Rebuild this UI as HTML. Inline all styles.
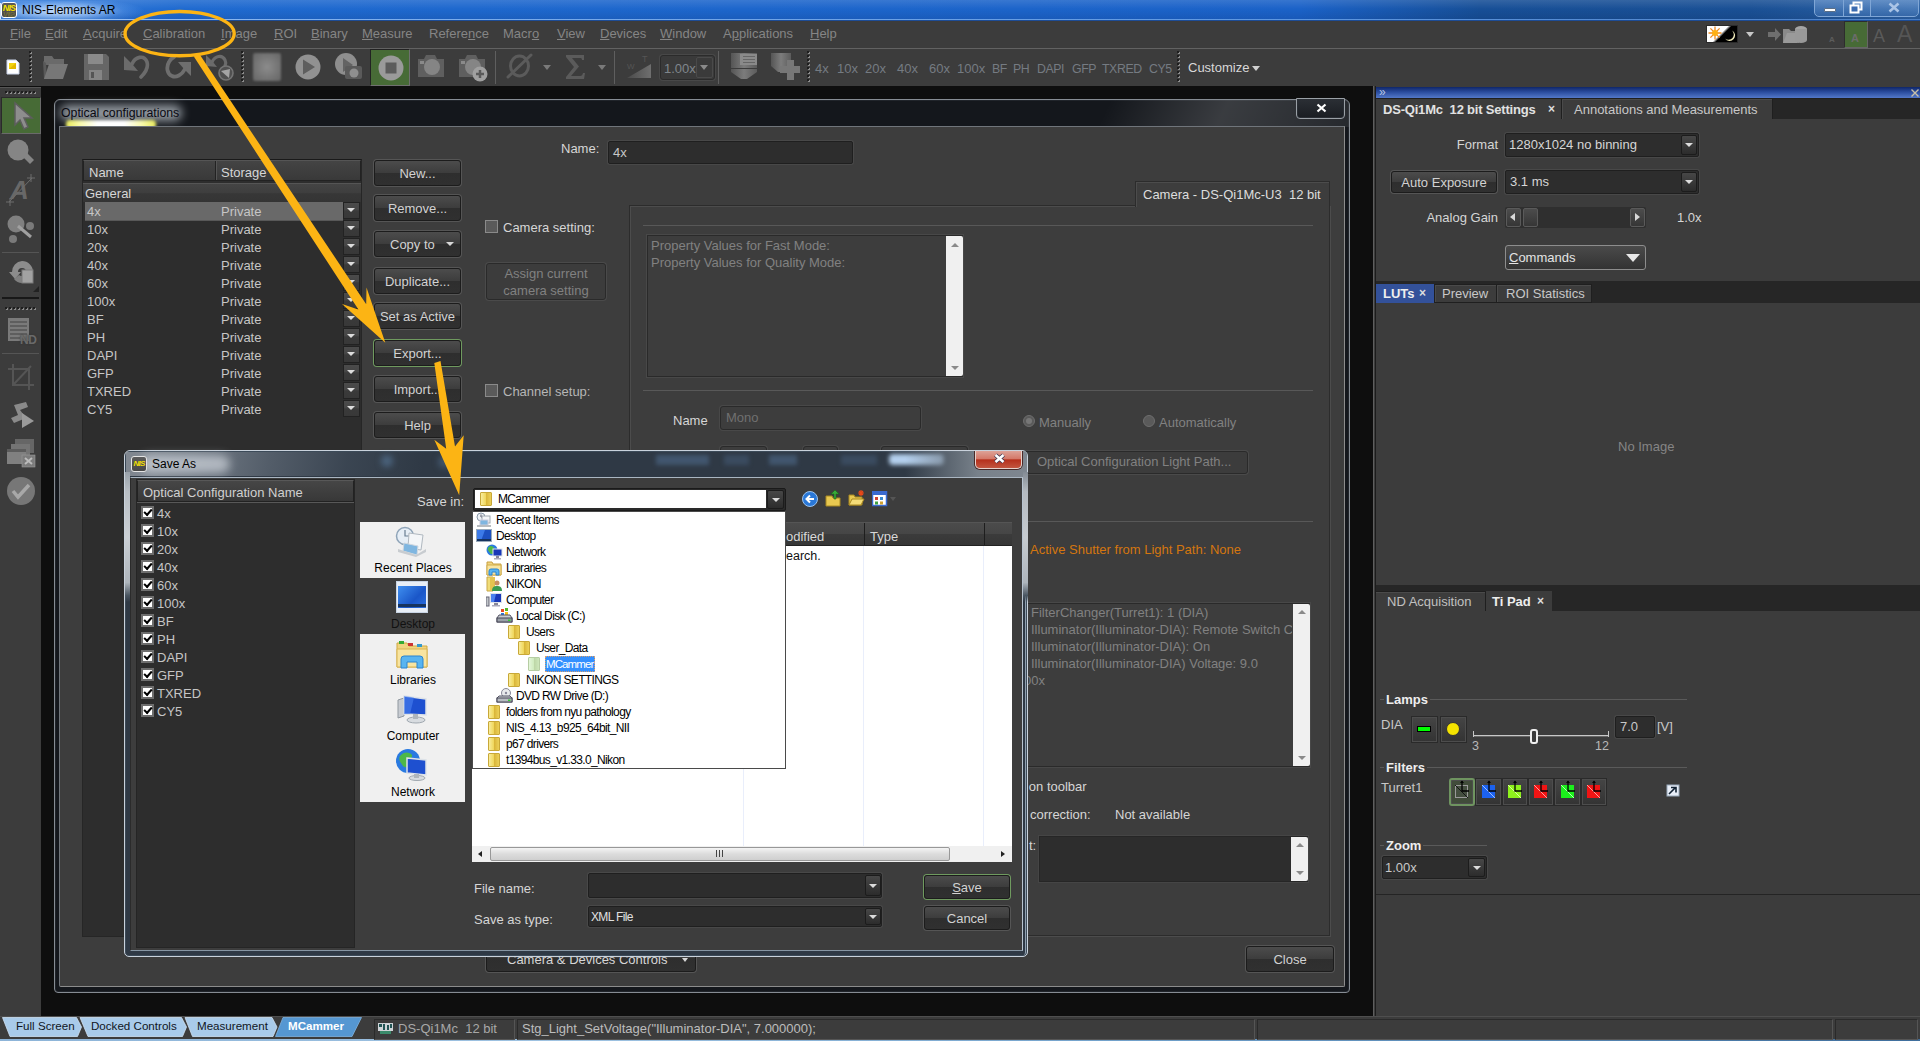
<!DOCTYPE html>
<html><head><meta charset="utf-8"><title>NIS-Elements AR</title>
<style>
*{box-sizing:border-box;margin:0;padding:0}
html,body{width:1920px;height:1041px;overflow:hidden;background:#3c3c3c;font-family:"Liberation Sans",sans-serif;font-size:13px;color:#d6d6d6}
.abs,.abs>*{position:absolute}
.abs{left:0;top:0}
.t{white-space:nowrap;line-height:16px;height:16px}
.dis{color:#818181}
.btn{border:1px solid #1c1c1c;border-radius:3px;background:linear-gradient(#4c4c4c 0%,#3d3d3d 48%,#2e2e2e 52%,#303030 100%);box-shadow:0 0 0 1px #555;text-align:center;color:#d2d2d2;white-space:nowrap;padding-top:1px}
.inp{background:#2d2d2d;border:1px solid #1f1f1f;border-radius:2px;box-shadow:0 0 0 1px #484848}
.dd{background:linear-gradient(#474747,#2c2c2c);border:1px solid #1c1c1c;border-radius:2px}
.dd:after{content:"";position:absolute;left:50%;top:50%;margin:-2px 0 0 -4px;border:4px solid transparent;border-top:4px solid #dcdcdc;border-bottom:0}
.hl{background:#666}
.sep{background:#5a5a5a;height:1px}
.grip{width:4px;background:repeating-linear-gradient(#8a8a8a 0,#8a8a8a 1px,#222 1px,#222 3px,transparent 3px,transparent 4px);background-size:3px 4px}
.tbl{top:61px;color:#757b82;font-size:13px}
.hgrip{height:4px;background:repeating-linear-gradient(90deg,#8a8a8a 0,#8a8a8a 1px,#222 1px,#222 3px,transparent 3px,transparent 4px)}
.sbtn{background:linear-gradient(#4c4c4c,#363636);border:1px solid #5a5a5a;border-radius:2px}
.sq{background:linear-gradient(#454545,#333);border:1px solid #2a2a2a;box-shadow:inset 0 0 0 1px #4d4d4d}
.lr{font-size:13px;color:#c6c6c6}
.ldd{width:17px;height:17px;background:linear-gradient(#4b4b4b 0,#464646 45%,#3a3a3a 52%,#383838 100%);border:1px solid #222}
.ldd:after{content:"";position:absolute;left:3px;top:5px;border:4px solid transparent;border-top:4.500px solid #dcdcdc;border-bottom:0}
.gl{height:1px;background:#585858}
.cb{width:13px;height:13px;background:#5a5a5a;border:1px solid #8a8a8a}
.rb{width:12px;height:12px;border-radius:50%;background:#5a5a5a;border:1px solid #6e6e6e}
.cbw{width:13px;height:13px;background:#fff;border:2px solid #6e6e6e}
.cbw:after{content:"";position:absolute;left:1px;top:1px;width:6px;height:3px;border-left:2px solid #000;border-bottom:2px solid #000;transform:rotate(-48deg)}
.pl{left:360px;width:106px;text-align:center;font-size:12px;color:#000}
.fold{width:12px;height:14px;background:linear-gradient(90deg,#f8ec9c 0,#f0d860 45%,#d8b438 50%,#ecd058 100%);border:1px solid #c8a838;border-radius:1px}
</style></head><body>
<svg width="0" height="0" style="position:absolute"><defs><pattern id="gp" width="4" height="4" patternUnits="userSpaceOnUse"><rect width="2" height="2" fill="#1e1e1e"/><rect x="2" y="1" width="1" height="2" fill="#8c8c8c"/><rect x="1" y="2" width="1" height="1" fill="#8c8c8c"/></pattern></defs></svg>
<!-- ===== Title bar ===== -->
<div class="abs" id="titlebar">
 <div style="left:0;top:0;width:1920px;height:20px;background:linear-gradient(90deg,#3a80dc 0,#1f6ad0 180px,#1b62c8 1300px,#174f97 1480px,#1a5095 1750px,#2c62a4 1920px)"></div>
 <div style="left:0;top:0;width:1920px;height:20px;background:linear-gradient(rgba(255,255,255,.12),rgba(255,255,255,0) 45%,rgba(0,0,30,.10) 100%)"></div>
 <div style="left:0;top:19px;width:1920px;height:1px;background:linear-gradient(90deg,#a8c8f2 0,#7fb0ee 300px,#5c96e0 1300px,#4b7fc4 1920px)"></div>
 <div style="left:0;top:20px;width:1920px;height:1px;background:#1d4c96"></div>
 <div style="left:0;top:3px;width:1px;height:16px;background:#e8f0fa"></div>
 <div style="left:0;top:1px;width:170px;height:18px;background:radial-gradient(ellipse 85px 13px at 60px 10px,rgba(215,232,255,.9),rgba(180,212,252,.6) 45%,rgba(130,180,245,.25) 75%,rgba(120,170,240,0) 100%)"></div>
 <!-- app icon -->
 <div style="left:1px;top:2px;width:16px;height:16px;background:linear-gradient(#5c5c5c,#484848);border:1.500px solid #fff;border-radius:3px"></div>
 <div class="t" style="left:1px;top:4px;width:16px;font-size:9px;line-height:9px;height:9px;font-weight:bold;font-style:italic;color:#f5e100;text-align:center;letter-spacing:-.8px">NIS</div>
 <div class="t" style="left:1px;top:11px;width:16px;font-size:8px;line-height:6px;height:6px;overflow:hidden;font-weight:bold;font-style:italic;color:#f5e100;opacity:.22;text-align:center;letter-spacing:-.8px;transform:scaleY(-1)">NIS</div>
 <div class="t" style="left:22px;top:2px;color:#000;font-size:12px">NIS-Elements AR</div>
 <!-- window controls -->
 <div style="left:1814px;top:-2px;width:105px;height:19px;border:1px solid #7fa6d6;border-radius:0 0 5px 5px;background:linear-gradient(rgba(130,170,220,.55),rgba(70,120,185,.45))"></div>
 <div style="left:1843px;top:0;width:1px;height:16px;background:#7fa6d6"></div>
 <div style="left:1870px;top:0;width:1px;height:16px;background:#7fa6d6"></div>
 <div style="left:1824px;top:8px;width:12px;height:4px;background:#fff;border:1px solid #5c6f86;border-radius:1px"></div>
 <svg style="left:1849px;top:1px" width="14" height="13" viewBox="0 0 14 13"><rect x="4.5" y="1.5" width="8" height="7" fill="none" stroke="#fff" stroke-width="2"/><rect x="1.5" y="4.5" width="8" height="7" fill="#3a6bb0" stroke="#fff" stroke-width="2"/></svg>
 <svg style="left:1888px;top:2px" width="12" height="11" viewBox="0 0 12 11"><path d="M1.5 1.5 L10.5 9.5 M10.5 1.5 L1.5 9.5" stroke="#aac4e6" stroke-width="2.6"/></svg>
</div>
<!-- ===== Menu bar ===== -->
<div class="abs" id="menubar" style="color:#858585;font-size:13px">
 <div style="left:0;top:21px;width:1920px;height:27px;background:#3c3c3c"></div>
 <div style="left:0;top:48px;width:1920px;height:1px;background:#626262"></div>
 <div class="t" style="left:10px;top:26px"><u>F</u>ile</div>
 <div class="t" style="left:45px;top:26px"><u>E</u>dit</div>
 <div class="t" style="left:83px;top:26px"><u>A</u>cquire</div>
 <div class="t" style="left:143px;top:26px"><u>C</u>alibration</div>
 <div class="t" style="left:221px;top:26px"><u>I</u>mage</div>
 <div class="t" style="left:274px;top:26px"><u>R</u>OI</div>
 <div class="t" style="left:311px;top:26px"><u>B</u>inary</div>
 <div class="t" style="left:362px;top:26px"><u>M</u>easure</div>
 <div class="t" style="left:429px;top:26px">Refere<u>n</u>ce</div>
 <div class="t" style="left:503px;top:26px">Macr<u>o</u></div>
 <div class="t" style="left:557px;top:26px"><u>V</u>iew</div>
 <div class="t" style="left:600px;top:26px"><u>D</u>evices</div>
 <div class="t" style="left:660px;top:26px"><u>W</u>indow</div>
 <div class="t" style="left:723px;top:26px">A<u>p</u>plications</div>
 <div class="t" style="left:810px;top:26px"><u>H</u>elp</div>
 <!-- right side of menu bar -->
 <div style="left:1706px;top:25px;width:32px;height:18px;background:linear-gradient(135deg,#fff 0,#fff 46%,#000 54%,#000 100%);border:1px solid #2a2a2a"></div>
 <svg style="left:1708px;top:26px" width="14" height="14" viewBox="0 0 14 14"><g stroke="#f08a1e" stroke-width="1.3"><path d="M7 0.5V13.5M0.5 7H13.5M2.4 2.4L11.6 11.6M11.6 2.4L2.4 11.6"/></g><circle cx="7" cy="7" r="3" fill="#ffb013"/></svg>
 <svg style="left:1724px;top:30px" width="12" height="12" viewBox="0 0 12 12"><path d="M8 0.5A5.5 5.5 0 1 1 1 8.5A4.6 4.6 0 0 0 8 0.5Z" fill="#efe9b8"/></svg>
 <div style="left:1746px;top:32px;border:4px solid transparent;border-top:5px solid #c8c8c8;border-bottom:0"></div>
 <svg style="left:1767px;top:24px" width="44" height="22" viewBox="0 0 44 22"><path d="M1 8h7V4l6 6.5L8 17v-4H1z" fill="#6e6e6e"/><path d="M16 5h6l2 2h8v12H16z" fill="#8a8a8a"/><path d="M16 19l4-10h14l-4 10z" fill="#9a9a9a"/><ellipse cx="34" cy="5" rx="6" ry="3" fill="#a5a5a5"/><path d="M28 5v11a6 3 0 0 0 12 0V5z" fill="#999"/></svg>
 <div class="t" style="left:1829px;top:32px;font-size:8px;font-weight:bold;color:#5c5c5c">A</div>
 <div style="left:1844px;top:21px;width:24px;height:27px;background:#476b36;border:1px solid #2d2d2d;border-right-color:#666;border-bottom-color:#666"></div>
 <div class="t" style="left:1851px;top:30px;font-size:11px;font-weight:bold;color:#6c6c6c">A</div>
 <div class="t" style="left:1873px;top:27px;font-size:18px;line-height:18px;height:18px;color:#5a5a5a">A</div>
 <div class="t" style="left:1897px;top:23px;font-size:23px;line-height:23px;height:23px;color:#555">A</div>
</div>
<!-- ===== Toolbar ===== -->
<div class="abs" id="toolbar">
 <div style="left:0;top:49px;width:1920px;height:38px;background:#3c3c3c"></div>
 <!-- new doc icon -->
 <svg style="left:6px;top:59px" width="14" height="16" viewBox="0 0 14 16"><path d="M1 1h9l3 3v11H1z" fill="#fff" stroke="#c8d2e8" stroke-width="1"/><rect x="3" y="4" width="7" height="6" fill="#f2d311"/><path d="M3 10l7-6v6z" fill="#e4b800"/></svg>
 <!-- grippers -->
 <svg style="left:29px;top:51px" width="4" height="31"><rect width="4" height="31" fill="url(#gp)"/></svg>
 <svg style="left:241px;top:51px" width="4" height="31"><rect width="4" height="31" fill="url(#gp)"/></svg>
 <svg style="left:807px;top:51px" width="4" height="31"><rect width="4" height="31" fill="url(#gp)"/></svg>
 <svg style="left:1177px;top:51px" width="4" height="31"><rect width="4" height="31" fill="url(#gp)"/></svg>
 <!-- open folder -->
 <svg style="left:42px;top:53px" width="28" height="28" viewBox="0 0 28 28"><path d="M2 3h8l2 3h10v6H2z" fill="#6a6a6a"/><path d="M2 26L1 8l3 2 1 16z" fill="#5a5a5a"/><path d="M2 26l5-15h19l-5 15z" fill="#777"/></svg>
 <!-- floppy -->
 <svg style="left:83px;top:53px" width="27" height="28" viewBox="0 0 27 28"><path d="M1 1h22l3 3v23H1z" fill="#666"/><rect x="5" y="1" width="15" height="10" fill="#8a8a8a"/><rect x="6" y="17" width="13" height="10" fill="#858585"/><rect x="8" y="19" width="3" height="6" fill="#555"/></svg>
 <!-- undo -->
 <svg style="left:123px;top:53px" width="27" height="27" viewBox="0 0 27 27"><path d="M1 3v14l14 1-5-6z" fill="#6b6b6b"/><path d="M9 11C12 4 21 1 24 9c1.500 5-2 11-6 15" fill="none" stroke="#6b6b6b" stroke-width="3.600" stroke-linecap="round"/></svg>
 <!-- redo -->
 <svg style="left:165px;top:54px" width="28" height="27" viewBox="0 0 28 27"><path d="M13 8h13v14l-7-7z" fill="#6e6e6e"/><path d="M20 15c-3 6-9 9-13 7C2 20 1 13 4 8c1-2 3-4 5-5" fill="none" stroke="#6e6e6e" stroke-width="3.800" stroke-linecap="round"/></svg>
 <!-- undo+ -->
 <svg style="left:205px;top:53px" width="30" height="30" viewBox="0 0 30 30"><path d="M1 2v11l11 1-4-5z" fill="#6b6b6b"/><path d="M7 9c3-6 10-8 13-2 1 2 1 4 0 6" fill="none" stroke="#6b6b6b" stroke-width="3.200" stroke-linecap="round"/><circle cx="21" cy="20" r="7" fill="#505050" stroke="#747474" stroke-width="1.600"/><path d="M16 18l9-2-1 9z" fill="#a4a4a4"/></svg>
 <!-- stop square -->
 <div style="left:253px;top:53px;width:28px;height:28px;background:radial-gradient(#8c8c8c,#707070 70%,#666);border-radius:2px;filter:blur(.8px)"></div>
 <!-- play -->
 <svg style="left:294px;top:53px" width="28" height="28" viewBox="0 0 28 28"><circle cx="14" cy="14" r="12.500" fill="#919191"/><path d="M9 6.500L21 14 9 21.500z" fill="#5e5e5e"/></svg>
 <!-- play + camera -->
 <svg style="left:334px;top:52px" width="30" height="30" viewBox="0 0 30 30"><circle cx="12" cy="12" r="11" fill="#8e8e8e"/><path d="M9 6l10 7-10 7z" fill="#636363"/><rect x="11" y="14" width="17" height="13" rx="2" fill="#5a5a5a"/><circle cx="20" cy="21" r="4.500" fill="#8f8f8f"/></svg>
 <!-- green active button -->
 <div style="left:370px;top:49px;width:40px;height:37px;background:#476b36;border:1px solid #222;border-right-color:#707070;border-bottom-color:#707070"></div>
 <svg style="left:377px;top:54px" width="28" height="28" viewBox="0 0 28 28"><circle cx="14" cy="14" r="12.500" fill="#9a9a9a"/><rect x="8.500" y="8.500" width="11" height="11" fill="#5c5c5c"/></svg>
 <!-- camera -->
 <svg style="left:417px;top:53px" width="28" height="26" viewBox="0 0 28 26"><path d="M1 6h6l2-4h9l2 4h7v18H1z" fill="#5f5f5f"/><circle cx="15" cy="14" r="8" fill="#858585"/><rect x="3" y="8" width="4" height="3" fill="#8a8a8a"/></svg>
 <!-- camera plus -->
 <svg style="left:458px;top:53px" width="32" height="30" viewBox="0 0 32 30"><path d="M1 6h6l2-4h9l2 4h7v18H1z" fill="#5f5f5f"/><circle cx="15" cy="14" r="8" fill="#858585"/><rect x="3" y="8" width="4" height="3" fill="#8a8a8a"/><circle cx="22" cy="21" r="7.500" fill="#a0a0a0"/><path d="M18 21h8M22 17v8" stroke="#5a5a5a" stroke-width="2.500"/></svg>
 <!-- separators -->
 <div style="left:495px;top:51px;width:1px;height:33px;background:#5f5f5f"></div>
 <div style="left:614px;top:51px;width:1px;height:33px;background:#5f5f5f"></div>
 <div style="left:718px;top:51px;width:1px;height:33px;background:#5f5f5f"></div>
 <!-- O-slash -->
 <svg style="left:506px;top:53px" width="27" height="26" viewBox="0 0 27 26"><ellipse cx="13.500" cy="13" rx="9" ry="10" fill="none" stroke="#5b5b5b" stroke-width="3"/><path d="M2 24L25 2" stroke="#5b5b5b" stroke-width="3" stroke-linecap="round"/></svg>
 <div style="left:543px;top:65px;border:4px solid transparent;border-top:5px solid #7a7a7a;border-bottom:0"></div>
 <!-- Sigma -->
 <svg style="left:565px;top:54px" width="21" height="26" viewBox="0 0 21 26"><path d="M1 1h18v5h-2c0-1.500-.5-2-2-2H7l7 8.500L6 22h9c2 0 2.500-1 3-3h2l-1 6H1v-2l8-10L1 3z" fill="#5b5b5b"/></svg>
 <div style="left:598px;top:65px;border:4px solid transparent;border-top:5px solid #7a7a7a;border-bottom:0"></div>
 <!-- wedge -->
 <svg style="left:626px;top:53px" width="27" height="27" viewBox="0 0 27 27"><defs><linearGradient id="wg" x1="0" x2="1"><stop offset="0" stop-color="#4a4a4a"/><stop offset="1" stop-color="#6f6f6f"/></linearGradient></defs><path d="M1 25L25 11v14z" fill="url(#wg)"/><text x="1" y="16" font-size="8" fill="#555" font-family="Liberation Sans">W</text><text x="16" y="9" font-size="9" fill="#555" font-family="Liberation Sans">T</text></svg>
 <!-- zoom combo -->
 <div style="left:660px;top:55px;width:55px;height:25px;border:1px solid #2b2b2b;border-radius:3px;background:#3a3a3a;box-shadow:0 0 0 1px #484848"></div>
 <div style="left:696px;top:57px;width:17px;height:21px;border:1px solid #4a4a4a;border-radius:2px"></div>
 <div class="t" style="left:664px;top:61px;color:#80868c;font-size:13px">1.00x</div>
 <div style="left:700px;top:65px;border:4px solid transparent;border-top:5px solid #8a8a8a;border-bottom:0"></div>
 <!-- objectives -->
 <svg style="left:730px;top:52px" width="29" height="28" viewBox="0 0 29 28"><defs><linearGradient id="og" x1="0" x2="1"><stop offset="0" stop-color="#555"/><stop offset=".5" stop-color="#7c7c7c"/><stop offset="1" stop-color="#5c5c5c"/></linearGradient></defs><path d="M1 1h26v15H1z" fill="url(#og)"/><path d="M1 17h26v3L17 27h-6L1 20z" fill="url(#og)"/><rect x="10" y="2" width="17" height="11" fill="#8a8a8a"/><path d="M13 4.500h12M13 7.500h12M13 10.500h12" stroke="#666" stroke-width="1.200"/></svg>
 <svg style="left:770px;top:52px" width="30" height="30" viewBox="0 0 30 30"><path d="M1 1h20v14l-6 5H8L1 14z" fill="url(#og)"/><path d="M17 8h7v6h6v7h-6v7h-7v-7h-7v-7h7z" fill="#777"/></svg>
 <!-- objective labels -->
 <div class="t tbl" style="left:815px">4x</div>
 <div class="t tbl" style="left:837px">10x</div>
 <div class="t tbl" style="left:865px">20x</div>
 <div class="t tbl" style="left:897px">40x</div>
 <div class="t tbl" style="left:929px">60x</div>
 <div class="t tbl" style="left:957px">100x</div>
 <div class="t tbl" style="left:992px;font-size:12.300px;letter-spacing:-.400px">BF</div>
 <div class="t tbl" style="left:1013px;font-size:12.300px;letter-spacing:-.400px">PH</div>
 <div class="t tbl" style="left:1037px;font-size:12.300px;letter-spacing:-.400px">DAPI</div>
 <div class="t tbl" style="left:1072px;font-size:12.300px;letter-spacing:-.400px">GFP</div>
 <div class="t tbl" style="left:1102px;font-size:12.300px;letter-spacing:-.400px">TXRED</div>
 <div class="t tbl" style="left:1149px;font-size:12.300px;letter-spacing:-.400px">CY5</div>
 <div class="t" style="left:1188px;top:60px;color:#d8d8d8;font-size:13px">Customize</div>
 <div style="left:1252px;top:66px;border:4px solid transparent;border-top:5px solid #d0d0d0;border-bottom:0"></div>
</div>
<!-- ===== Workspace + left toolbar ===== -->
<div class="abs" id="workspace">
 <div style="left:0;top:86px;width:1920px;height:930px;background:#0e0e0e"></div>
 <div style="left:0;top:87px;width:41px;height:929px;background:#3c3c3c;border-top:1px solid #555"></div>
 <svg style="left:5px;top:91px" width="31" height="3"><rect width="31" height="3" fill="url(#gp)"/></svg>
 <div style="left:1px;top:97px;width:40px;height:37px;background:#476b36;border:1px solid #2a2a2a;border-right-color:#6a6a6a;border-bottom-color:#6a6a6a"></div>
 <!-- pointer -->
 <svg style="left:12px;top:101px" width="22" height="30" viewBox="0 0 22 30"><path d="M3 2v22l5-5 4 9 4-2-4-9h8z" fill="#8d8d8d" stroke="#5e5e5e" stroke-width="1.500"/></svg>
 <!-- magnifier -->
 <svg style="left:6px;top:138px" width="30" height="30" viewBox="0 0 30 30"><circle cx="12" cy="12" r="10.500" fill="#858585"/><path d="M17 19l4-4 7 7-4 4z" fill="#858585"/></svg>
 <!-- A+ annotate -->
 <div class="t" style="left:10px;top:176px;font-size:26px;line-height:28px;height:28px;font-weight:bold;font-style:italic;color:#686868">A</div>
 <svg style="left:5px;top:174px" width="32" height="32" viewBox="0 0 32 32"><path d="M4 28L27 4M1 28h8M5 24v8M22 4h8M26 0v8" stroke="#6d6d6d" stroke-width="1"/></svg>
 <!-- points -->
 <svg style="left:5px;top:215px" width="32" height="30" viewBox="0 0 32 30"><circle cx="11" cy="9" r="8.500" fill="#808080"/><circle cx="25" cy="11" r="4" fill="#7a7a7a"/><circle cx="8" cy="24" r="4" fill="#7a7a7a"/><path d="M13 11l13 11" stroke="#a0a0a0" stroke-width="3"/></svg>
 <div style="left:2px;top:252px;width:37px;height:1px;background:#555"></div>
 <!-- rotate -->
 <svg style="left:8px;top:258px" width="28" height="28" viewBox="0 0 28 28"><path d="M14 3a11 11 0 0 1 11 11h-7a4 4 0 0 0-8 0l3 0-6 7-6-7h3A11 11 0 0 1 14 3z" fill="#8c8c8c"/><path d="M25 14v6H14v5a11 11 0 0 1-8-4l5-4a4 4 0 0 0 3 1z" fill="#808080"/><rect x="14" y="12" width="11" height="13" fill="#a2a2a2" stroke="#7a7a7a"/></svg>
 <div style="left:33px;top:286px;border:3px solid transparent;border-right-color:#222;border-bottom-color:#222"></div>
 <div style="left:2px;top:297px;width:37px;height:2px;background:#181818"></div>
 <svg style="left:5px;top:307px" width="31" height="3"><rect width="31" height="3" fill="url(#gp)"/></svg>
 <!-- ND -->
 <svg style="left:7px;top:317px" width="30" height="28" viewBox="0 0 30 28"><path d="M1 1h21v23H1z" fill="#7a7a7a"/><path d="M3 5h17M3 9h17M3 13h17M3 17h17M3 21h10" stroke="#555" stroke-width="1.500"/></svg>
 <div class="t" style="left:20px;top:332px;font-size:12px;font-weight:bold;color:#6a6a6a;letter-spacing:-.5px;text-shadow:0 0 2px #333">ND</div>
 <div style="left:2px;top:353px;width:37px;height:1px;background:#555"></div>
 <!-- crop -->
 <svg style="left:7px;top:363px" width="28" height="28" viewBox="0 0 28 28"><path d="M6 1v21h21M1 6h21v21M6 22L24 3" fill="none" stroke="#555" stroke-width="2"/></svg>
 <!-- scroll/flag -->
 <svg style="left:9px;top:401px" width="26" height="28" viewBox="0 0 26 28"><path d="M5 4l12-3 2 5-8 3 6 8-12 5-3-5 7-3z" fill="#8a8a8a"/><path d="M13 12l12 8-12 7z" fill="#9a9a9a"/></svg>
 <!-- windows x -->
 <svg style="left:6px;top:438px" width="30" height="30" viewBox="0 0 30 30"><rect x="9" y="1" width="19" height="14" fill="#666"/><rect x="5" y="6" width="19" height="14" fill="#747474"/><rect x="1" y="11" width="19" height="15" fill="#808080"/><rect x="1" y="11" width="19" height="3" fill="#5c5c5c"/><rect x="16" y="17" width="13" height="12" fill="#7c7c7c" stroke="#999" stroke-width=".6"/><path d="M19 20l7 6M26 20l-7 6" stroke="#bbb" stroke-width="2"/></svg>
 <!-- check -->
 <svg style="left:6px;top:476px" width="30" height="30" viewBox="0 0 30 30"><circle cx="15" cy="15" r="14" fill="#777"/><path d="M7 15l5 6L23 9" fill="none" stroke="#a8a8a8" stroke-width="3.500"/></svg>
</div>
<!-- ===== Status bar ===== -->
<div class="abs" id="statusbar">
 <div style="left:0;top:1016px;width:1920px;height:25px;background:#3c3c3c;border-top:1px solid #4e4e4e"></div>
 <div style="left:0;top:1039px;width:1920px;height:2px;background:linear-gradient(90deg,#8db4d8,#9fc3e2 30%,#6f9fc9 60%,#3f6e9c 100%)"></div>
 <svg style="left:0;top:1017px" width="364" height="20" viewBox="0 0 364 20"><path d="M2.500 .5H76.500L81.500 10 77.500 19.500H10z" fill="#a9cbea" stroke="#cfe2f4" stroke-width=".8"/><path d="M80 .5H181.500L186.500 10 182.500 19.500H88z" fill="#a9cbea" stroke="#cfe2f4" stroke-width=".8"/><path d="M185 .5H272L277 10 273 19.500H192.500z" fill="#a9cbea" stroke="#cfe2f4" stroke-width=".8"/><path d="M283 .5H361.500L352 19.500H275.500z" fill="#5597d2" stroke="#7fb3e0" stroke-width=".8"/></svg>
 <div class="t" style="left:16px;top:1018px;color:#10161e;font-size:11.600px">Full Screen</div>
 <div class="t" style="left:91px;top:1018px;color:#10161e;font-size:11.600px">Docked Controls</div>
 <div class="t" style="left:197px;top:1018px;color:#10161e;font-size:11.600px">Measurement</div>
 <div class="t" style="left:288px;top:1018px;color:#fff;font-size:11.600px;font-weight:bold">MCammer</div>
 <div style="left:374px;top:1019px;width:141px;height:21px;border:1px solid #2a2a2a;border-right-color:#555;border-bottom-color:#555"></div>
 <svg style="left:378px;top:1022px" width="16" height="14" viewBox="0 0 16 14"><rect x="0" y="1" width="15" height="8" fill="#cfd4d8"/><path d="M1 2h3v3H1zM5 2h2v6H5zM9 3h2v5H9zM12 2h2v4h-2z" fill="#255"/><path d="M2 9h11v3H2z" fill="#3a8a6a"/></svg>
 <div class="t" style="left:398px;top:1021px;color:#a8a8a8;font-size:13px">DS-Qi1Mc&nbsp; 12 bit</div>
 <div style="left:517px;top:1019px;width:738px;height:21px;border:1px solid #2a2a2a;border-right-color:#555;border-bottom-color:#555"></div>
 <div class="t" style="left:522px;top:1021px;color:#bdbdbd;font-size:13px">Stg_Light_SetVoltage("Illuminator-DIA", 7.000000);</div>
 <div style="left:1257px;top:1019px;width:576px;height:21px;border:1px solid #2a2a2a;border-right-color:#555;border-bottom-color:#555"></div>
 <div style="left:1835px;top:1019px;width:83px;height:21px;border:1px solid #2a2a2a;border-right-color:#555;border-bottom-color:#555"></div>
</div>
<!-- ===== Right docked panel ===== -->
<div class="abs" id="rightpanel">
 <div style="left:1373px;top:86px;width:3px;height:930px;background:linear-gradient(90deg,#5e5e5e 0,#5e5e5e 45%,#1c1c1c 55%,#1c1c1c 100%)"></div>
 <div style="left:1376px;top:86px;width:544px;height:930px;background:#3c3c3c"></div>
 <div style="left:1376px;top:87px;width:544px;height:11px;background:linear-gradient(#0f2668,#2a4c9e 45%,#5378c9)"></div>
 <div class="t" style="left:1379px;top:85px;font-size:12px;line-height:14px;height:14px;color:#b9c6e6">»</div>
 <svg style="left:1911px;top:89px" width="8" height="8" viewBox="0 0 8 8"><path d="M0.500 0.500l7 7M7.500 0.500l-7 7" stroke="#c8c0a8" stroke-width="1.400"/></svg>
 <!-- tab row 1 -->
 <div style="left:1376px;top:98px;width:544px;height:21px;background:#262626"></div>
 <div style="left:1376px;top:98px;width:186px;height:21px;background:#3c3c3c"></div>
 <div style="left:1376px;top:98px;width:544px;height:1px;background:#1f1f1f"></div>
 <div style="left:1561px;top:99px;width:212px;height:20px;background:#3c3c3c;border:1px solid #1f1f1f;border-top:0;border-bottom:0;box-shadow:inset 1px 1px 0 #4a4a4a"></div>
 <div class="t" style="left:1383px;top:102px;font-weight:bold;color:#e2e2e2;font-size:13px;letter-spacing:-.2px">DS-Qi1Mc&nbsp; 12 bit Settings</div>
 <div class="t" style="left:1548px;top:101px;font-weight:bold;color:#ddd;font-size:12px">×</div>
 <div class="t" style="left:1574px;top:102px;color:#c8c8c8;font-size:13px">Annotations and Measurements</div>
 <!-- Format -->
 <div class="t" style="left:1398px;top:137px;width:100px;text-align:right;font-size:13px">Format</div>
 <div class="inp" style="left:1505px;top:133px;width:194px;height:24px"></div>
 <div class="dd" style="left:1681px;top:135px;width:16px;height:20px"></div>
 <div class="t" style="left:1509px;top:137px;font-size:13px">1280x1024 no binning</div>
 <!-- Auto exposure -->
 <div class="btn" style="left:1391px;top:171px;width:106px;height:22px;line-height:20px;font-size:13px">Auto Exposure</div>
 <div class="inp" style="left:1505px;top:170px;width:194px;height:24px"></div>
 <div class="dd" style="left:1681px;top:172px;width:16px;height:20px"></div>
 <div class="t" style="left:1510px;top:174px;font-size:13px">3.1 ms</div>
 <!-- Analog gain -->
 <div class="t" style="left:1398px;top:210px;width:100px;text-align:right;font-size:13px">Analog Gain</div>
 <div style="left:1505px;top:207px;width:141px;height:21px;background:#2f2f2f;border-radius:2px"></div>
 <div class="sbtn" style="left:1506px;top:208px;width:15px;height:19px"></div>
 <div class="sbtn" style="left:1523px;top:208px;width:15px;height:19px"></div>
 <div class="sbtn" style="left:1630px;top:208px;width:15px;height:19px"></div>
 <div style="left:1510px;top:213px;border:4px solid transparent;border-right:5px solid #d8d8d8;border-left:0"></div>
 <div style="left:1635px;top:213px;border:4px solid transparent;border-left:5px solid #d8d8d8;border-right:0"></div>
 <div class="t" style="left:1677px;top:210px;font-size:13px">1.0x</div>
 <!-- Commands -->
 <div style="left:1505px;top:245px;width:141px;height:25px;border:1px solid #8d8d8d;border-radius:3px;background:linear-gradient(#4a4a4a,#333)"></div>
 <div class="t" style="left:1509px;top:250px;font-size:13px;color:#e4e4e4"><u>C</u>ommands</div>
 <div style="left:1626px;top:254px;border:7px solid transparent;border-top:8px solid #e8e8e8;border-bottom:0"></div>
 <!-- LUT tab row -->
 <div style="left:1376px;top:281px;width:544px;height:22px;background:#262626"></div>
 <div style="left:1376px;top:284px;width:58px;height:19px;background:#33519a"></div>
 <div style="left:1434px;top:284px;width:63px;height:19px;background:#3c3c3c;border:1px solid #1f1f1f;border-bottom:0;box-shadow:inset 1px 1px 0 #4a4a4a"></div>
 <div style="left:1496px;top:284px;width:96px;height:19px;background:#3c3c3c;border:1px solid #1f1f1f;border-bottom:0;box-shadow:inset 1px 1px 0 #4a4a4a"></div>
 <div style="left:1434px;top:302px;width:158px;height:1px;background:#1f1f1f"></div>
 <div class="t" style="left:1383px;top:286px;font-weight:bold;color:#eee;font-size:13px">LUTs</div>
 <div class="t" style="left:1419px;top:285px;font-weight:bold;color:#ddd;font-size:12px">×</div>
 <div class="t" style="left:1442px;top:286px;color:#c8c8c8;font-size:13px">Preview</div>
 <div class="t" style="left:1506px;top:286px;color:#c8c8c8;font-size:13px">ROI Statistics</div>
 <div class="t" style="left:1618px;top:439px;color:#858585;font-size:13px">No Image</div>
 <!-- ND acquisition row -->
 <div style="left:1376px;top:585px;width:544px;height:26px;background:#262626"></div>
 <div style="left:1376px;top:591px;width:110px;height:20px;background:#3c3c3c;border:1px solid #1f1f1f;border-bottom:0;border-left:0;box-shadow:inset 0 1px 0 #4a4a4a"></div>
 <div style="left:1486px;top:591px;width:66px;height:20px;background:#3c3c3c"></div>
 <div class="t" style="left:1387px;top:594px;color:#c0c0c0;font-size:13px">ND Acquisition</div>
 <div class="t" style="left:1492px;top:594px;font-weight:bold;color:#eee;font-size:13px">Ti Pad</div>
 <div class="t" style="left:1537px;top:593px;font-weight:bold;color:#ddd;font-size:12px">×</div>
 <!-- Lamps -->
 <div style="left:1380px;top:699px;width:307px;height:1px;background:#5a5a5a"></div>
 <div class="t" style="left:1384px;top:692px;font-weight:bold;color:#eee;background:#3c3c3c;padding:0 2px;font-size:13px">Lamps</div>
 <div class="t" style="left:1381px;top:717px;font-size:13px;color:#c8c8c8">DIA</div>
 <div class="sq" style="left:1411px;top:716px;width:27px;height:27px"></div>
 <div style="left:1417px;top:726px;width:14px;height:6px;background:#0f0;border:1px solid #000"></div>
 <div class="sq" style="left:1440px;top:716px;width:27px;height:27px"></div>
 <div style="left:1446px;top:722px;width:14px;height:14px;background:#f5e400;border-radius:50%;border:1px solid #333"></div>
 <div style="left:1473px;top:735px;width:136px;height:2px;background:#c8c8c8;border-bottom:1px solid #666"></div>
 <div style="left:1473px;top:731px;width:1px;height:6px;background:#c8c8c8"></div>
 <div style="left:1608px;top:731px;width:1px;height:6px;background:#c8c8c8"></div>
 <div style="left:1530px;top:729px;width:8px;height:15px;background:#3c3c3c;border:2px solid #f0f0f0;border-radius:3px"></div>
 <div class="t" style="left:1472px;top:738px;font-size:12.500px;color:#b8b8b8">3</div>
 <div class="t" style="left:1595px;top:738px;font-size:12.500px;color:#b8b8b8">12</div>
 <div class="inp" style="left:1615px;top:716px;width:40px;height:22px"></div>
 <div class="t" style="left:1620px;top:719px;font-size:13px;color:#c8c8c8">7.0</div>
 <div class="t" style="left:1657px;top:719px;font-size:13px;color:#c8c8c8">[V]</div>
 <!-- Filters -->
 <div style="left:1380px;top:767px;width:307px;height:1px;background:#5a5a5a"></div>
 <div class="t" style="left:1384px;top:760px;font-weight:bold;color:#eee;background:#3c3c3c;padding:0 2px;font-size:13px">Filters</div>
 <div class="t" style="left:1381px;top:780px;font-size:13px;color:#c8c8c8">Turret1</div>
 <div class="sq" style="left:1449px;top:778px;width:26px;height:28px;border:2px solid #6f9460;border-radius:3px;background:#414c3a"></div>
 <div class="sq" style="left:1475px;top:778px;width:27px;height:28px"></div>
 <div class="sq" style="left:1502px;top:778px;width:26px;height:28px"></div>
 <div class="sq" style="left:1528px;top:778px;width:26px;height:28px"></div>
 <div class="sq" style="left:1554px;top:778px;width:27px;height:28px"></div>
 <div class="sq" style="left:1581px;top:778px;width:26px;height:28px"></div>
 <svg style="left:1449px;top:778px" width="160" height="28" viewBox="0 0 160 28">
  <g id="fc0"><rect x="6.500" y="7.500" width="12" height="12" fill="#454f40" stroke="#9a9a9a"/><path d="M6 7l13 13" stroke="#151515" stroke-width="1"/><path d="M13 3v10h7" fill="none" stroke="#000" stroke-width="1.300"/><path d="M11 5l2-2.500L15 5z" fill="#000"/></g>
  <g transform="translate(27,0)"><rect x="6" y="7" width="13" height="13" fill="#1c62f0"/><path d="M6 7l13 13" stroke="#9cc0ff" stroke-width="1"/><path d="M13 3v10h7" fill="none" stroke="#000" stroke-width="1.300"/><path d="M11 5l2-2.500L15 5z" fill="#000"/></g>
  <g transform="translate(53,0)"><rect x="6" y="7" width="13" height="13" fill="#8ef21c"/><path d="M6 7l13 13" stroke="#d8ffa0" stroke-width="1"/><path d="M13 3v10h7" fill="none" stroke="#000" stroke-width="1.300"/><path d="M11 5l2-2.500L15 5z" fill="#000"/></g>
  <g transform="translate(79,0)"><rect x="6" y="7" width="13" height="13" fill="#f01414"/><path d="M6 7l13 13" stroke="#ffa0a0" stroke-width="1"/><path d="M13 3v10h7" fill="none" stroke="#000" stroke-width="1.300"/><path d="M11 5l2-2.500L15 5z" fill="#000"/></g>
  <g transform="translate(106,0)"><rect x="6" y="7" width="13" height="13" fill="#1cf01c"/><path d="M6 7l13 13" stroke="#b0ffb0" stroke-width="1"/><path d="M13 3v10h7" fill="none" stroke="#000" stroke-width="1.300"/><path d="M11 5l2-2.500L15 5z" fill="#000"/></g>
  <g transform="translate(132,0)"><rect x="6" y="7" width="13" height="13" fill="#f01414"/><path d="M6 7l13 13" stroke="#ffa0a0" stroke-width="1"/><path d="M13 3v10h7" fill="none" stroke="#000" stroke-width="1.300"/><path d="M11 5l2-2.500L15 5z" fill="#000"/></g>
 </svg>
 <svg style="left:1666px;top:784px" width="14" height="14" viewBox="0 0 14 14"><rect x="1" y="1" width="12" height="11" fill="#e8eef8" stroke="#9ab" stroke-width="1"/><path d="M3 10l6-6M5 3.500h5v5" fill="none" stroke="#123" stroke-width="1.600"/></svg>
 <!-- Zoom -->
 <div style="left:1380px;top:845px;width:107px;height:1px;background:#5a5a5a"></div>
 <div class="t" style="left:1384px;top:838px;font-weight:bold;color:#eee;background:#3c3c3c;padding:0 2px;font-size:13px">Zoom</div>
 <div class="inp" style="left:1382px;top:856px;width:105px;height:23px"></div>
 <div class="dd" style="left:1468px;top:858px;width:17px;height:19px"></div>
 <div class="t" style="left:1385px;top:860px;font-size:13px;color:#c8c8c8">1.00x</div>
 <div style="left:1376px;top:894px;width:544px;height:1px;background:#242424"></div>
</div>
<!-- ===== Optical configurations dialog ===== -->
<div class="abs" id="optdlg">
 <div style="left:54px;top:99px;width:1296px;height:894px;background:#14171c;border:1px solid #868c93;border-radius:6px 6px 4px 4px;box-shadow:inset 0 0 0 1px #20242a"></div>
 <div style="left:700px;top:100px;width:649px;height:27px;border-radius:0 6px 0 0;background:linear-gradient(115deg,rgba(255,255,255,0) 62%,rgba(255,255,255,.16) 80%,rgba(255,255,255,.08) 100%)"></div>
 <div style="left:60px;top:105px;width:122px;height:16px;background:rgba(225,232,240,.62);border-radius:8px;filter:blur(5px)"></div>
 <div style="left:66px;top:120px;width:90px;height:9px;border-radius:4px;background:linear-gradient(90deg,#e6e85a 0,#f8f9a8 15%,#fff 35%,#fff 65%,#f8f9a8 85%,#e6e85a 100%);filter:blur(1.600px)"></div>
 <div class="t" style="left:61px;top:105px;color:#0a0a12;font-size:12.300px">Optical configurations</div>
 <div style="left:1296px;top:98px;width:49px;height:21px;border:1px solid #9aa0a6;border-radius:0 0 4px 4px;box-shadow:inset 0 0 0 1px #2a2e34;background:linear-gradient(#2b2f35,#1a1d22)"></div>
 <svg style="left:1316px;top:103px" width="11" height="10" viewBox="0 0 11 10"><path d="M1.500 1.500l8 7M9.500 1.500l-8 7" stroke="#fff" stroke-width="2.200"/></svg>
 <div style="left:59px;top:126px;width:1286px;height:861px;background:#3d3d3d;border:1px solid #70757b;border-right-color:#8c8c8c;border-bottom-color:#8c8c8c;border-radius:0 0 2px 2px"></div>
 <!-- list -->
 <div style="left:82px;top:159px;width:280px;height:778px;background:#2d2d2d;border:1px solid #262626;border-top-color:#1a1a1a"></div>
 <div style="left:83px;top:160px;width:278px;height:21px;background:linear-gradient(#444,#393939);border:1px solid #222;border-top-color:#555"></div>
 <div style="left:215px;top:161px;width:1px;height:19px;background:#222"></div>
 <div style="left:216px;top:161px;width:1px;height:19px;background:#555"></div>
 <div class="t" style="left:89px;top:165px;font-size:13px">Name</div>
 <div class="t" style="left:221px;top:165px;font-size:13px">Storage</div>
 <div style="left:83px;top:183px;width:278px;height:19px;background:linear-gradient(#444 0,#3e3e3e 48%,#373737 54%,#343434 100%);border-top:1px solid #555"></div>
 <div class="t" style="left:85px;top:186px;font-size:13px">General</div>
 <div style="left:85px;top:202px;width:258px;height:18px;background:#696969"></div><div style="left:85px;top:220px;width:275px;height:1px;background:#585858"></div>
 <div class="t lr" style="left:87px;top:204px">4x</div><div class="t lr" style="left:221px;top:204px">Private</div><div class="ldd" style="left:343px;top:202px"></div>
 <div class="t lr" style="left:87px;top:222px">10x</div><div class="t lr" style="left:221px;top:222px">Private</div><div class="ldd" style="left:343px;top:220px"></div>
 <div class="t lr" style="left:87px;top:240px">20x</div><div class="t lr" style="left:221px;top:240px">Private</div><div class="ldd" style="left:343px;top:238px"></div>
 <div class="t lr" style="left:87px;top:258px">40x</div><div class="t lr" style="left:221px;top:258px">Private</div><div class="ldd" style="left:343px;top:256px"></div>
 <div class="t lr" style="left:87px;top:276px">60x</div><div class="t lr" style="left:221px;top:276px">Private</div><div class="ldd" style="left:343px;top:274px"></div>
 <div class="t lr" style="left:87px;top:294px">100x</div><div class="t lr" style="left:221px;top:294px">Private</div><div class="ldd" style="left:343px;top:292px"></div>
 <div class="t lr" style="left:87px;top:312px">BF</div><div class="t lr" style="left:221px;top:312px">Private</div><div class="ldd" style="left:343px;top:310px"></div>
 <div class="t lr" style="left:87px;top:330px">PH</div><div class="t lr" style="left:221px;top:330px">Private</div><div class="ldd" style="left:343px;top:328px"></div>
 <div class="t lr" style="left:87px;top:348px">DAPI</div><div class="t lr" style="left:221px;top:348px">Private</div><div class="ldd" style="left:343px;top:346px"></div>
 <div class="t lr" style="left:87px;top:366px">GFP</div><div class="t lr" style="left:221px;top:366px">Private</div><div class="ldd" style="left:343px;top:364px"></div>
 <div class="t lr" style="left:87px;top:384px">TXRED</div><div class="t lr" style="left:221px;top:384px">Private</div><div class="ldd" style="left:343px;top:382px"></div>
 <div class="t lr" style="left:87px;top:402px">CY5</div><div class="t lr" style="left:221px;top:402px">Private</div><div class="ldd" style="left:343px;top:400px"></div>
 <div class="btn" style="left:374px;top:160px;width:87px;height:26px;line-height:24px;font-size:13px">New...</div>
 <div class="btn" style="left:374px;top:195px;width:87px;height:26px;line-height:24px;font-size:13px">Remove...</div>
 <div class="btn" style="left:374px;top:231px;width:87px;height:26px;line-height:24px;font-size:13px"></div>
 <div class="btn" style="left:374px;top:268px;width:87px;height:26px;line-height:24px;font-size:13px">Duplicate...</div>
 <div class="btn" style="left:374px;top:303px;width:87px;height:26px;line-height:24px;font-size:13px">Set as Active</div>
 <div class="btn" style="left:374px;top:340px;width:87px;height:26px;line-height:24px;font-size:13px;box-shadow:0 0 0 1px #6f9a5f">Export...</div>
 <div class="btn" style="left:374px;top:376px;width:87px;height:26px;line-height:24px;font-size:13px">Import...</div>
 <div class="btn" style="left:374px;top:412px;width:87px;height:26px;line-height:24px;font-size:13px">Help</div>
 <div class="t" style="left:390px;top:237px;font-size:13px;color:#d2d2d2">Copy to</div>
 <div style="left:446px;top:242px;border:4px solid transparent;border-top:4px solid #d8d8d8;border-bottom:0"></div>
 <!-- right part -->
 <div class="t" style="left:561px;top:141px;font-size:13px">Name:</div>
 <div class="inp" style="left:608px;top:141px;width:245px;height:23px"></div>
 <div class="t" style="left:613px;top:145px;font-size:13px;color:#c8c8c8">4x</div>
 <!-- group box -->
 <div style="left:629px;top:205px;width:701px;height:731px;border:1px solid #2c2c2c;box-shadow:inset 1px 1px 0 #4c4c4c,1px 1px 0 #4c4c4c"></div>
 <div style="left:1135px;top:181px;width:195px;height:26px;background:#3d3d3d;border:1px solid #2c2c2c;border-bottom:0;box-shadow:inset 1px 1px 0 #4c4c4c"></div>
 <div class="t" style="left:1143px;top:187px;font-size:13px;color:#dedede">Camera - DS-Qi1Mc-U3&nbsp; 12 bit</div>
 <div class="gl" style="left:643px;top:225px;width:670px"></div>
 <div class="gl" style="left:643px;top:390px;width:670px"></div>
 <div class="gl" style="left:643px;top:521px;width:670px"></div>
 <div class="cb" style="left:485px;top:220px"></div>
 <div class="t" style="left:503px;top:220px;font-size:13px">Camera setting:</div>
 <div style="left:486px;top:263px;width:120px;height:37px;border:1px solid #2a2a2a;border-radius:3px;box-shadow:0 0 0 1px #4a4a4a;background:#3c3c3c"></div>
 <div class="t dis" style="left:486px;top:266px;width:120px;text-align:center;font-size:13px">Assign current</div>
 <div class="t dis" style="left:486px;top:283px;width:120px;text-align:center;font-size:13px">camera setting</div>
 <div style="left:647px;top:235px;width:316px;height:142px;background:#3d3d3d;border:1px solid #2a2a2a;box-shadow:0 0 0 1px #484848"></div>
 <div style="left:946px;top:236px;width:17px;height:140px;background:#f0f0f0;border-radius:0 2px 2px 0"></div>
 <div style="left:951px;top:243px;border:4px solid transparent;border-bottom:4px solid #8a8a8a;border-top:0"></div>
 <div style="left:951px;top:366px;border:4px solid transparent;border-top:4px solid #8a8a8a;border-bottom:0"></div>
 <div class="t dis" style="left:651px;top:238px;font-size:13px">Property Values for Fast Mode:</div>
 <div class="t dis" style="left:651px;top:255px;font-size:13px">Property Values for Quality Mode:</div>
 <div class="cb" style="left:485px;top:384px"></div>
 <div class="t" style="left:503px;top:384px;font-size:13px;color:#b6b6b6">Channel setup:</div>
 <div class="t" style="left:673px;top:413px;font-size:13px">Name</div>
 <div style="left:720px;top:406px;width:201px;height:24px;background:#3d3d3d;border:1px solid #2a2a2a;border-radius:3px;box-shadow:0 0 0 1px #484848"></div>
 <div class="t dis" style="left:726px;top:410px;font-size:13px;color:#707070">Mono</div>
 <div style="left:720px;top:446px;width:47px;height:20px;background:#3d3d3d;border:1px solid #2a2a2a;border-radius:3px;box-shadow:0 0 0 1px #484848"></div>
 <div style="left:803px;top:446px;width:35px;height:20px;background:#3d3d3d;border:1px solid #2a2a2a;border-radius:3px;box-shadow:0 0 0 1px #484848"></div>
 <div style="left:881px;top:446px;width:87px;height:20px;background:#3d3d3d;border:1px solid #2a2a2a;border-radius:3px;box-shadow:0 0 0 1px #484848"></div>
 <div class="rb" style="left:1023px;top:415px"></div><div style="left:1026px;top:418px;width:6px;height:6px;border-radius:50%;background:#777"></div>
 <div class="t dis" style="left:1039px;top:415px;font-size:13px">Manually</div>
 <div class="rb" style="left:1143px;top:415px"></div>
 <div class="t dis" style="left:1159px;top:415px;font-size:13px">Automatically</div>
 <div style="left:1000px;top:451px;width:248px;height:23px;border:1px solid #2a2a2a;border-radius:3px;box-shadow:0 0 0 1px #4a4a4a;background:#3c3c3c"></div>
 <div class="t dis" style="left:1037px;top:454px;font-size:13px">Optical Configuration Light Path...</div>
 <div class="t" style="left:1030px;top:542px;font-size:13px;color:#d4760f">Active Shutter from Light Path: None</div>
 <div style="left:1000px;top:603px;width:310px;height:164px;background:#3d3d3d;border:1px solid #2a2a2a;box-shadow:0 0 0 1px #484848"></div>
 <div style="left:1293px;top:604px;width:17px;height:162px;background:#f0f0f0;border-radius:0 2px 2px 0"></div>
 <div style="left:1298px;top:610px;border:4px solid transparent;border-bottom:4px solid #8a8a8a;border-top:0"></div>
 <div style="left:1298px;top:756px;border:4px solid transparent;border-top:4px solid #8a8a8a;border-bottom:0"></div>
 <div class="t dis" style="left:1031px;top:605px;font-size:13px">FilterChanger(Turret1): 1 (DIA)</div>
 <div class="t dis" style="left:1031px;top:622px;font-size:13px;width:261px;overflow:hidden">Illuminator(Illuminator-DIA): Remote Switch C</div>
 <div class="t dis" style="left:1031px;top:639px;font-size:13px">Illuminator(Illuminator-DIA): On</div>
 <div class="t dis" style="left:1031px;top:656px;font-size:13px">Illuminator(Illuminator-DIA) Voltage: 9.0</div>
 <div class="t dis" style="left:1024px;top:673px;font-size:13px">00x</div>
 <div class="t" style="left:1018px;top:779px;font-size:13px">n on toolbar</div>
 <div class="t" style="left:1030px;top:807px;font-size:13px">correction:</div>
 <div class="t" style="left:1115px;top:807px;font-size:13px">Not available</div>
 <div class="t" style="left:1029px;top:838px;font-size:13px">t:</div>
 <div style="left:1039px;top:836px;width:269px;height:46px;background:#2d2d2d;border:1px solid #262626;box-shadow:0 0 0 1px #454545"></div>
 <div style="left:1291px;top:837px;width:17px;height:44px;background:#f0f0f0;border-radius:0 2px 2px 0"></div>
 <div style="left:1296px;top:843px;border:4px solid transparent;border-bottom:4px solid #8a8a8a;border-top:0"></div>
 <div style="left:1296px;top:871px;border:4px solid transparent;border-top:4px solid #8a8a8a;border-bottom:0"></div>
 <div class="btn" style="left:1246px;top:946px;width:88px;height:26px;line-height:24px;font-size:13px">Close</div>
 <div class="btn" style="left:486px;top:944px;width:210px;height:28px;line-height:26px;font-size:13px"></div>
 <div class="t" style="left:507px;top:952px;font-size:13px">Camera &amp; Devices Controls</div>
 <div style="left:682px;top:958px;border:3.500px solid transparent;border-top:4px solid #d8d8d8;border-bottom:0"></div>
</div>
<!-- ===== Save As dialog ===== -->
<div class="abs" id="savedlg">
 <div style="left:124px;top:450px;width:904px;height:507px;background:#2f3945;border:1px solid #c9d2dc;border-radius:6px 6px 5px 5px;box-shadow:inset 0 0 0 1px #3c4a58,inset -2px 0 0 0 #8fa0b0"></div>
 <div style="left:126px;top:452px;width:380px;height:24px;background:linear-gradient(100deg,rgba(150,156,164,.8) 0,rgba(140,148,158,.72) 18%,rgba(112,122,134,.55) 38%,rgba(80,92,106,.35) 58%,rgba(47,57,69,0) 78%)"></div>
 <div style="left:140px;top:455px;width:90px;height:18px;background:rgba(225,230,236,.6);border-radius:9px;filter:blur(5px)"></div>
 <div style="left:381px;top:455px;width:12px;height:12px;background:rgba(90,125,160,.6);border-radius:50%;filter:blur(3px)"></div>
 <div style="left:438px;top:456px;width:12px;height:12px;background:rgba(90,125,160,.45);border-radius:50%;filter:blur(3px)"></div>
 <div style="left:656px;top:455px;width:53px;height:10px;background:rgba(72,96,124,.75);filter:blur(2px)"></div>
 <div style="left:724px;top:455px;width:25px;height:10px;background:rgba(66,88,114,.6);filter:blur(2px)"></div>
 <div style="left:769px;top:455px;width:28px;height:10px;background:rgba(72,96,124,.75);filter:blur(2px)"></div>
 <div style="left:841px;top:455px;width:36px;height:10px;background:rgba(66,88,114,.6);filter:blur(2px)"></div>
 <div style="left:889px;top:454px;width:55px;height:11px;background:#b4d0ee;filter:blur(2.200px);border-radius:4px"></div>
 <div style="left:905px;top:451px;width:122px;height:26px;border-radius:0 5px 0 0;background:linear-gradient(90deg,rgba(47,57,69,0) 0,rgba(110,120,130,.7) 35%,rgba(124,133,142,.95) 60%,#7f8790 100%)"></div>
 <div style="left:131px;top:456px;width:16px;height:16px;background:linear-gradient(#5c5c5c,#484848);border:1px solid #e4e4e4;border-radius:3px"></div>
 <div class="t" style="left:131px;top:459px;width:16px;font-size:8px;line-height:9px;height:9px;font-weight:bold;font-style:italic;color:#f5e100;text-align:center;letter-spacing:-.8px">NIS</div>
 <div class="t" style="left:152px;top:456px;color:#000;font-size:12px">Save As</div>
 <div style="left:125px;top:472px;width:5px;height:130px;background:linear-gradient(#9aa2aa 0,#b8bec4 15%,#cbd0d5 50%,#aeb5bc 85%,#4a5662 95%,rgba(47,57,69,0) 100%)"></div>
 <div style="left:1023px;top:472px;width:5px;height:130px;background:linear-gradient(#838b94 0,#b4bac0 15%,#c6cbd0 50%,#aeb5bc 85%,#4a5662 95%,rgba(47,57,69,0) 100%)"></div>
 <!-- close -->
 <div style="left:975px;top:451px;width:47px;height:18px;clip-path:inset(0 -1px -1px -1px);border:1px solid #e6d2cc;border-top:0;border-radius:0 0 5px 5px;background:linear-gradient(#dda297 0,#d47868 46%,#b5301c 52%,#c2553f 100%);box-shadow:0 0 0 1px #4a2a28"></div>
 <svg style="left:993px;top:453px" width="13" height="11" viewBox="0 0 13 11"><path d="M2.500 2l8 7M10.500 2l-8 7" stroke="#3a3550" stroke-width="4.200"/><path d="M2.500 2l8 7M10.500 2l-8 7" stroke="#fff" stroke-width="2.600"/></svg>
 <!-- client -->
 <div style="left:130px;top:477px;width:893px;height:474px;background:#3d3d3d;border:1px solid #b8c4d0;border-top-color:#aab6c2;border-left-color:#2b2b2b;border-bottom-color:#8796a4"></div>
 <!-- OC list -->
 <div style="left:136px;top:479px;width:219px;height:469px;background:#2d2d2d;border:1px solid #252525"></div>
 <div style="left:137px;top:480px;width:217px;height:22px;background:linear-gradient(#464646,#383838);border:1px solid #222;border-top-color:#585858"></div>
 <div style="left:137px;top:502px;width:217px;height:1px;background:#585858"></div>
 <div class="t" style="left:143px;top:485px;font-size:13px;color:#d0d0d0">Optical Configuration Name</div>
 <div class="cbw" style="left:141px;top:506px"></div><div class="t lr" style="left:157px;top:506px">4x</div>
 <div class="cbw" style="left:141px;top:524px"></div><div class="t lr" style="left:157px;top:524px">10x</div>
 <div class="cbw" style="left:141px;top:542px"></div><div class="t lr" style="left:157px;top:542px">20x</div>
 <div class="cbw" style="left:141px;top:560px"></div><div class="t lr" style="left:157px;top:560px">40x</div>
 <div class="cbw" style="left:141px;top:578px"></div><div class="t lr" style="left:157px;top:578px">60x</div>
 <div class="cbw" style="left:141px;top:596px"></div><div class="t lr" style="left:157px;top:596px">100x</div>
 <div class="cbw" style="left:141px;top:614px"></div><div class="t lr" style="left:157px;top:614px">BF</div>
 <div class="cbw" style="left:141px;top:632px"></div><div class="t lr" style="left:157px;top:632px">PH</div>
 <div class="cbw" style="left:141px;top:650px"></div><div class="t lr" style="left:157px;top:650px">DAPI</div>
 <div class="cbw" style="left:141px;top:668px"></div><div class="t lr" style="left:157px;top:668px">GFP</div>
 <div class="cbw" style="left:141px;top:686px"></div><div class="t lr" style="left:157px;top:686px">TXRED</div>
 <div class="cbw" style="left:141px;top:704px"></div><div class="t lr" style="left:157px;top:704px">CY5</div>
 <!-- places bar -->
 <div style="left:360px;top:522px;width:105px;height:56px;background:#f0f0f0"></div>
 <div style="left:360px;top:634px;width:105px;height:168px;background:#f0f0f0"></div>
 <div class="t pl" style="top:560px">Recent Places</div>
 <div class="t pl" style="top:616px;color:#111">Desktop</div>
 <div class="t pl" style="top:672px">Libraries</div>
 <div class="t pl" style="top:728px">Computer</div>
 <div class="t pl" style="top:784px">Network</div>
 <!-- recent places icon -->
 <svg style="left:395px;top:526px" width="34" height="32" viewBox="0 0 34 32"><circle cx="10" cy="10" r="8.500" fill="#e6eef6" stroke="#8fa4b8" stroke-width="1.500"/><path d="M10 4v6h4" stroke="#6a7f92" fill="none" stroke-width="1.200"/><path d="M14 7l14 2-2 15-13-2z" fill="#f4f6f8" stroke="#b0b8c0"/><path d="M9 17l14 3-1 9-14-4z" fill="#7fb6e0" stroke="#d0d8e0"/><path d="M3 23l18 6 10-6v3l-10 5L3 26z" fill="#c8ccd0"/></svg>
 <!-- desktop icon -->
 <div style="left:396px;top:581px;width:32px;height:32px;background:#e8eef6;border:1px solid #c8d4e4"></div>
 <div style="left:398px;top:586px;width:28px;height:22px;background:linear-gradient(135deg,#3f8ff0,#1a56c8 60%,#2a6fe0)"></div>
 <div style="left:398px;top:604px;width:28px;height:3px;background:#16335e"></div>
 <!-- libraries icon -->
 <svg style="left:395px;top:639px" width="34" height="31" viewBox="0 0 34 31"><path d="M2 4h10l2 3h18v21H2z" fill="#f0d480" stroke="#d0a840"/><path d="M2 10h30v18H2z" fill="#f8e4a0" stroke="#d8b450"/><path d="M6 29v-9a3 3 0 0 1 3-3h16a3 3 0 0 1 3 3v9h-6v-6H12v6z" fill="#58b4f0" stroke="#2a84d0"/><rect x="4" y="2" width="5" height="3" fill="#3a3"/><rect x="13" y="4" width="5" height="3" fill="#c33"/><rect x="22" y="5" width="5" height="3" fill="#39c"/></svg>
 <!-- computer icon -->
 <svg style="left:396px;top:694px" width="34" height="30" viewBox="0 0 34 30"><path d="M2 6l6-2v18l-6 2z" fill="#c8ccd2" stroke="#9098a0"/><path d="M8 2l22 3v16L8 20z" fill="#1e50d0" stroke="#dde2e8" stroke-width="1.500"/><path d="M8 2l10 1.400L14 20 8 20z" fill="#4a80f0" opacity=".6"/><ellipse cx="20" cy="26" rx="9" ry="3" fill="#d8dce0" stroke="#a0a8b0"/><rect x="17" y="20" width="5" height="5" fill="#b0b6bc"/></svg>
 <!-- network icon -->
 <svg style="left:395px;top:748px" width="34" height="33" viewBox="0 0 34 33"><circle cx="13" cy="13" r="12" fill="#2a7ae0"/><path d="M5 8c4-5 10-4 12-1 1 3-4 4-3 8 1 3-3 6-6 3-2-3-5-6-3-10z" fill="#4db848"/><path d="M12 10l19 2v15l-19-2z" fill="#1e50d0" stroke="#dde2e8" stroke-width="1.500"/><ellipse cx="22" cy="30" rx="8" ry="2.500" fill="#d8dce0" stroke="#a0a8b0"/><rect x="19" y="26" width="5" height="4" fill="#b0b6bc"/></svg>
 <div class="t" style="left:364px;top:494px;width:100px;text-align:right;font-size:13px">Save in:</div>
 <!-- file list behind -->
 <div style="left:472px;top:522px;width:540px;height:324px;background:#fff"></div>
 <div style="left:473px;top:522px;width:539px;height:24px;background:linear-gradient(#4b4b4b,#464646 48%,#3b3b3b 52%,#363636);border-top:1px solid #555;border-bottom:1px solid #222"></div>
 <div style="left:864px;top:523px;width:1px;height:22px;background:#1e1e1e"></div>
 <div style="left:984px;top:523px;width:1px;height:22px;background:#1e1e1e"></div>
 <div class="t" style="left:786px;top:529px;font-size:13px;color:#d8d8d8">odified</div>
 <div class="t" style="left:870px;top:529px;font-size:13px;color:#d8d8d8">Type</div>
 <div style="left:743px;top:546px;width:1px;height:300px;background:#e9eefb"></div>
 <div style="left:863px;top:546px;width:1px;height:300px;background:#e9eefb"></div>
 <div style="left:983px;top:546px;width:1px;height:300px;background:#e9eefb"></div>
 <div class="t" style="left:786px;top:548px;font-size:12.500px;color:#111">earch.</div>
 <!-- h scrollbar -->
 <div style="left:472px;top:846px;width:540px;height:16px;background:#f0f0f0"></div>
 <div style="left:490px;top:847px;width:460px;height:14px;background:linear-gradient(#f4f4f4,#dcdcdc 50%,#cfcfcf);border:1px solid #989898;border-radius:2px"></div>
 <div style="left:478px;top:851px;border:3.500px solid transparent;border-right:4px solid #222;border-left:0"></div>
 <div style="left:1001px;top:851px;border:3.500px solid transparent;border-left:4px solid #222;border-right:0"></div>
 <div style="left:716px;top:850px;width:1px;height:7px;background:#444;box-shadow:3px 0 0 #444,6px 0 0 #444"></div>
 <!-- save-in combo -->
 <div style="left:473px;top:488px;width:313px;height:23px;background:#2a2a2a;border:1px solid #1a1a1a;border-radius:2px"></div>
 <div style="left:475px;top:490px;width:291px;height:18px;background:#fff"></div>
 <div class="dd" style="left:767px;top:490px;width:17px;height:19px"></div>
 <div class="fold" style="left:480px;top:492px"></div>
 <div class="t" style="left:498px;top:491px;font-size:12px;color:#000;letter-spacing:-.650px">MCammer</div>
 <!-- mini toolbar -->
 <svg style="left:802px;top:491px" width="16" height="16" viewBox="0 0 16 16"><circle cx="8" cy="8" r="7.500" fill="#2a78d8" stroke="#9cc4f0"/><path d="M12 8H5M8 4.500L4.500 8 8 11.500" stroke="#fff" stroke-width="2" fill="none"/></svg>
 <svg style="left:825px;top:490px" width="16" height="17" viewBox="0 0 16 17"><path d="M1 6h6l1 2h7v8H1z" fill="#e8c850" stroke="#a88820"/><path d="M9 9V4H6l4-4 4 4h-3v5z" fill="#38a838" stroke="#1a681a" stroke-width=".6"/></svg>
 <svg style="left:848px;top:490px" width="17" height="17" viewBox="0 0 17 17"><path d="M1 5h5l1 2h7v8H1z" fill="#e8c850" stroke="#a88820"/><path d="M1 15l3-6h12l-3 6z" fill="#f4dc78" stroke="#a88820"/><path d="M13 0v6M10 3h6M11 1l4 4M15 1l-4 4" stroke="#e84818" stroke-width="1.200"/></svg>
 <svg style="left:872px;top:491px" width="26" height="16" viewBox="0 0 26 16"><rect x=".5" y=".5" width="14" height="14" fill="#fff" stroke="#3a6ad0" stroke-width="1.500"/><rect x="1" y="1" width="13" height="3" fill="#3a6ad0"/><rect x="3" y="6" width="3" height="3" fill="#d04030"/><rect x="8" y="6" width="3" height="3" fill="#3a8ad0"/><rect x="3" y="10.500" width="3" height="3" fill="#40a040"/><rect x="8" y="10.500" width="3" height="3" fill="#d0a030"/><path d="M18 6h6l-3 4z" fill="#555"/></svg>
 <!-- dropdown list -->
 <div style="left:472px;top:511px;width:314px;height:258px;background:#fff;border:1px solid #4a4a4a"></div>
 <svg class="ic" style="left:476px;top:512px" width="16" height="16" viewBox="0 0 16 16"><circle cx="5" cy="5" r="4" fill="#eef2f6" stroke="#8898a8"/><path d="M5 2.500V5h2" stroke="#556" fill="none"/><rect x="6" y="4" width="8" height="7" fill="#f4f6f8" stroke="#a0a8b0"/><rect x="4" y="8" width="8" height="5" fill="#7fb6e0" stroke="#ccd"/><path d="M1 13h14v2H1z" fill="#b8bcc0"/></svg><div class="t" style="left:496px;top:512px;font-size:12px;color:#000;letter-spacing:-.650px">Recent Items</div>
 <svg class="ic" style="left:476px;top:528px" width="16" height="16" viewBox="0 0 16 16"><rect x=".5" y="1.500" width="15" height="12" fill="#1c50c0" stroke="#9ab"/><path d="M1 2h8L5 13H1z" fill="#3c7ae8"/><rect x="1" y="11" width="14" height="2" fill="#16335e"/></svg><div class="t" style="left:496px;top:528px;font-size:12px;color:#000;letter-spacing:-.650px">Desktop</div>
 <svg class="ic" style="left:486px;top:544px" width="17" height="16" viewBox="0 0 17 16"><circle cx="6" cy="6" r="5.500" fill="#2a7ae0"/><path d="M2 4c2-3 5-2 6 0s-2 2-1 4-2 3-3 1-3-3-2-5z" fill="#4db848"/><rect x="7" y="5" width="9" height="7" fill="#1838b8" stroke="#dde2e8"/><rect x="10" y="12" width="3" height="2" fill="#889"/><rect x="8" y="14" width="7" height="1.500" fill="#aab"/></svg><div class="t" style="left:506px;top:544px;font-size:12px;color:#000;letter-spacing:-.650px">Network</div>
 <svg class="ic" style="left:486px;top:560px" width="16" height="16" viewBox="0 0 16 16"><path d="M1 2h5l1 2h8v11H1z" fill="#f0d480" stroke="#c8a040"/><path d="M1 5h14v10H1z" fill="#f8e4a0" stroke="#d0ac48"/><path d="M3 15v-4a2 2 0 0 1 2-2h6a2 2 0 0 1 2 2v4h-3v-3H6v3z" fill="#58b4f0" stroke="#2a84d0"/></svg><div class="t" style="left:506px;top:560px;font-size:12px;color:#000;letter-spacing:-.650px">Libraries</div>
 <svg class="ic" style="left:486px;top:576px" width="16" height="16" viewBox="0 0 16 16"><path d="M1 1h6v14H1z" fill="#f0dc78" stroke="#c8a848"/><path d="M4 1h5v14H4z" fill="#e4c450"/><circle cx="11" cy="7" r="2.500" fill="#c89060"/><path d="M6 15c0-4 2-5 5-5s5 1 5 5z" fill="#3a9a50"/></svg><div class="t" style="left:506px;top:576px;font-size:12px;color:#000;letter-spacing:-.650px">NIKON</div>
 <svg class="ic" style="left:486px;top:592px" width="17" height="16" viewBox="0 0 17 16"><rect x="0" y="5" width="3" height="9" fill="#c0c4c8" stroke="#667"/><rect x="4.500" y="1.500" width="11" height="9" fill="#1838b8" stroke="#dde2e8"/><path d="M5 2h5L8 10H5z" fill="#4a80f0"/><rect x="8" y="11" width="4" height="2" fill="#889"/><rect x="6" y="13" width="8" height="1.500" fill="#aab"/></svg><div class="t" style="left:506px;top:592px;font-size:12px;color:#000;letter-spacing:-.650px">Computer</div>
 <svg class="ic" style="left:496px;top:608px" width="17" height="16" viewBox="0 0 17 16"><path d="M5 1l3 0v3H5z" fill="#e84820"/><path d="M9 0h3v3H9z" fill="#58b828"/><path d="M5 5h3v3H5z" fill="#2878e0"/><path d="M9 4h3v3H9z" fill="#f8c018"/><path d="M1 10l2-3h11l2 3v4H1z" fill="#c8ccd0" stroke="#556"/><rect x="1" y="10" width="15" height="4" fill="#9aa0a8" stroke="#445"/><rect x="12" y="11.500" width="2.500" height="1.500" fill="#3c3"/></svg><div class="t" style="left:516px;top:608px;font-size:12px;color:#000;letter-spacing:-.650px">Local Disk (C:)</div>
 <div class="fold" style="left:508px;top:625px"></div><div class="t" style="left:526px;top:624px;font-size:12px;color:#000;letter-spacing:-.650px">Users</div>
 <div class="fold" style="left:518px;top:641px"></div><div class="t" style="left:536px;top:640px;font-size:12px;color:#000;letter-spacing:-.650px">User_Data</div>
 <div class="fold" style="left:528px;top:657px;opacity:.65;filter:hue-rotate(40deg) saturate(.5)"></div><div class="t" style="left:545px;top:656px;font-size:11.500px;color:#fff;letter-spacing:-.900px;background:#3390ff;outline:1px dotted #d8a070;outline-offset:-1px;padding:0 2px 0 1px">MCammer</div>
 <div class="fold" style="left:508px;top:673px"></div><div class="t" style="left:526px;top:672px;font-size:12px;color:#000;letter-spacing:-.650px">NIKON SETTINGS</div>
 <svg class="ic" style="left:496px;top:688px" width="17" height="16" viewBox="0 0 17 16"><circle cx="10" cy="5" r="4.500" fill="#e8eaec" stroke="#889"/><circle cx="10" cy="5" r="1.200" fill="#889"/><path d="M1 10l2-2h11l2 2v4H1z" fill="#d0d4d8" stroke="#556"/><rect x="1" y="10" width="15" height="4" fill="#b8bcc2" stroke="#445"/><rect x="12" y="11.500" width="2.500" height="1.500" fill="#3c3"/></svg><div class="t" style="left:516px;top:688px;font-size:12px;color:#000;letter-spacing:-.650px">DVD RW Drive (D:)</div>
 <div class="fold" style="left:488px;top:705px"></div><div class="t" style="left:506px;top:704px;font-size:12px;color:#000;letter-spacing:-.650px">folders from nyu pathology</div>
 <div class="fold" style="left:488px;top:721px"></div><div class="t" style="left:506px;top:720px;font-size:12px;color:#000;letter-spacing:-.650px">NIS_4.13_b925_64bit_NII</div>
 <div class="fold" style="left:488px;top:737px"></div><div class="t" style="left:506px;top:736px;font-size:12px;color:#000;letter-spacing:-.650px">p67 drivers</div>
 <div class="fold" style="left:488px;top:753px"></div><div class="t" style="left:506px;top:752px;font-size:12px;color:#000;letter-spacing:-.650px">t1394bus_v1.33.0_Nikon</div>
 <!-- file name / type -->
 <div class="t" style="left:474px;top:881px;font-size:13px">File name:</div>
 <div class="inp" style="left:588px;top:873px;width:294px;height:25px"></div>
 <div class="dd" style="left:865px;top:875px;width:16px;height:21px"></div>
 <div class="t" style="left:474px;top:912px;font-size:13px">Save as type:</div>
 <div class="inp" style="left:588px;top:906px;width:294px;height:21px"></div>
 <div class="dd" style="left:865px;top:908px;width:16px;height:17px"></div>
 <div class="t" style="left:591px;top:909px;font-size:12px;color:#e0e0e0;letter-spacing:-.650px">XML File</div>
 <div class="btn" style="left:924px;top:875px;width:86px;height:24px;line-height:22px;font-size:13px;box-shadow:0 0 0 1px #6f9a5f"><u>S</u>ave</div>
 <div class="btn" style="left:924px;top:906px;width:86px;height:24px;line-height:22px;font-size:13px">Cancel</div>
</div>
<!-- ===== Annotation arrows ===== -->
<svg style="position:absolute;left:0;top:0" width="1920" height="1041" viewBox="0 0 1920 1041">
 <ellipse cx="179.600" cy="33.600" rx="54.600" ry="22.100" fill="none" stroke="#fcb414" stroke-width="3.400"/>
 <polygon points="193.800,56.600 199.200,53.800 366.200,304.200 366.500,287.400 385.300,342.700 342,304 358.400,309.600" fill="#fcb414"/>
 <polygon points="434.300,363 440.500,361 455,446.500 463.700,435.300 459.200,495.200 434.300,439.700 446.200,448.700" fill="#fcb414"/>
</svg>

</body></html>
